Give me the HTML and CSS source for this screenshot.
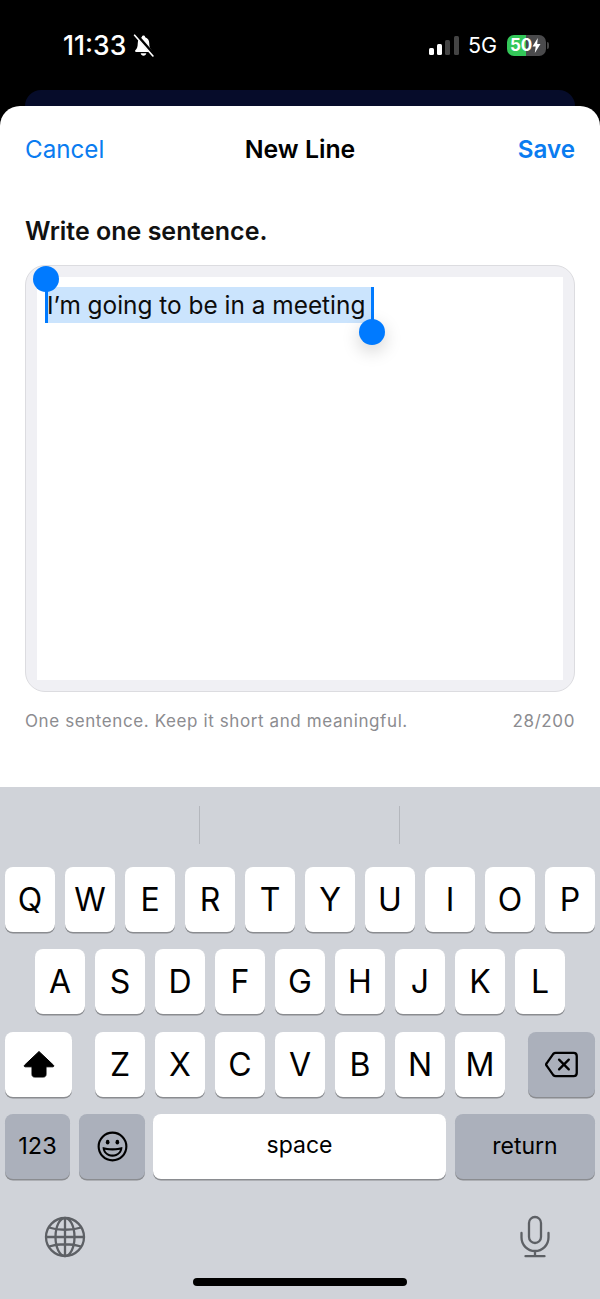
FILE: index.html
```html
<!DOCTYPE html>
<html lang="en">
<head>
<meta charset="utf-8">
<title>New Line</title>
<link rel="stylesheet" href="styles.css">
</head>
<body>
<div class="phone">
  <header class="status">
    <div class="status-left">
      <span class="time">11:33</span>
      <svg class="bell" viewBox="0 0 20 22"><path d="M10 1.500c-.9 0-1.500.6-1.600 1.500C5.800 3.800 4.500 6 4.500 8.800c0 3.400-.7 5.200-2.300 6.800-.6.600-.2 1.600.7 1.600h14.200c.9 0 1.300-1 .7-1.600-1.600-1.600-2.300-3.400-2.300-6.800 0-2.800-1.300-5-3.900-5.800C11.500 2.100 10.900 1.500 10 1.500zM7.300 18.300c.2 1.400 1.300 2.400 2.700 2.400s2.500-1 2.700-2.400z" fill="#fff"/><path d="M2.800 .6 19.800 19.900" stroke="#000" stroke-width="3.400"/><path d="M1.500 1.200 19 21" stroke="#fff" stroke-width="1.600" stroke-linecap="round"/></svg>
    </div>
    <div class="status-right">
      <svg class="signal" viewBox="0 0 30 19"><rect x="0" y="12" width="5" height="7" rx="1.500" fill="#fff"/><rect x="8" y="8" width="5" height="11" rx="1.500" fill="#fff"/><rect x="16" y="4" width="5" height="15" rx="1.500" fill="#444"/><rect x="25" y="0" width="5" height="19" rx="1.500" fill="#444"/></svg>
      <span class="net">5G</span>
      <div class="battery"><span class="battery-num">50</span><svg class="bolt" viewBox="0 0 9 15"><path d="M5.800 0 .5 8.500h3.200L2.800 15l5.700-9H5.200z" fill="#fff"/></svg></div>
      <span class="battery-nub"></span>
    </div>
  </header>
  <div class="behind-card"></div>
  <main class="sheet">
    <nav class="nav">
      <span class="nav-cancel">Cancel</span>
      <span class="nav-title">New Line</span>
      <span class="nav-save">Save</span>
    </nav>
    <h1 class="prompt">Write one sentence.</h1>
    <div class="field">
      <div class="field-inner">
        <span class="selection">I’m going to be in a meeting<i class="caret caret-start"></i><i class="caret caret-end"></i><i class="handle handle-start"></i><i class="handle handle-end"></i></span>
      </div>
    </div>
    <div class="hint">
      <span>One sentence. Keep it short and meaningful.</span>
      <span>28/200</span>
    </div>
  </main>
  <section class="keyboard">
    <div class="suggestions"><span class="slot"></span><span class="slot"></span><span class="slot"></span></div>
    <div class="rows">
      <div class="row">
        <span class="key">Q</span><span class="key">W</span><span class="key">E</span><span class="key">R</span><span class="key">T</span><span class="key">Y</span><span class="key">U</span><span class="key">I</span><span class="key">O</span><span class="key">P</span>
      </div>
      <div class="row row-mid">
        <span class="key">A</span><span class="key">S</span><span class="key">D</span><span class="key">F</span><span class="key">G</span><span class="key">H</span><span class="key">J</span><span class="key">K</span><span class="key">L</span>
      </div>
      <div class="row row-third">
        <span class="key key-shift"><svg class="ico-shift" viewBox="0 0 32 28"><path d="M16 1.500 1.500 15.200c-.6.600-.2 1.600.6 1.600H9v7.700c0 1.500 1 2.500 2.500 2.500h9c1.500 0 2.500-1 2.500-2.500v-7.700h6.900c.8 0 1.200-1 .6-1.600z" fill="#000" stroke="#000" stroke-linejoin="round"/></svg></span>
        <div class="letters">
          <span class="key">Z</span><span class="key">X</span><span class="key">C</span><span class="key">V</span><span class="key">B</span><span class="key">N</span><span class="key">M</span>
        </div>
        <span class="key key-dark key-delete"><svg class="ico-del" viewBox="0 0 34 27"><path d="M11 1.500h18.500c2 0 3.200 1.200 3.200 3.200v17.600c0 2-1.200 3.200-3.200 3.200H11c-1 0-1.800-.4-2.500-1.100L1.700 14.700c-.6-.7-.6-1.700 0-2.400l6.800-9.700c.7-.7 1.500-1.100 2.500-1.100z" fill="none" stroke="#000" stroke-width="2.400"/><path d="M14.500 8.500l10 10M24.500 8.500l-10 10" stroke="#000" stroke-width="2.400" stroke-linecap="round"/></svg></span>
      </div>
      <div class="row row-bottom">
        <span class="key key-dark key-num">123</span>
        <span class="key key-dark key-emoji"><svg class="ico-emoji" viewBox="0 0 32 32"><circle cx="16" cy="16" r="14.300" fill="none" stroke="#000" stroke-width="2.200"/><ellipse cx="11" cy="11.500" rx="1.900" ry="2.500"/><ellipse cx="21" cy="11.500" rx="1.900" ry="2.500"/><path d="M5.800 16.500c3 .9 6.500 1.300 10.200 1.300s7.200-.4 10.200-1.300c.3 5.500-4.400 10-10.200 10S5.500 22 5.800 16.500z"/><path d="M8.300 19.300c2.400.5 5 .7 7.700.7s5.300-.2 7.700-.7c-.7 2.800-3.800 5-7.700 5s-7-2.200-7.700-5z" fill="#abb0bb"/></svg></span>
        <span class="key key-space">space</span>
        <span class="key key-dark key-return">return</span>
      </div>
    </div>
    <div class="kb-tools">
      <svg class="ico-globe" viewBox="0 0 42 42" fill="none" stroke="#5d6065" stroke-width="2.300"><circle cx="21" cy="21" r="19"/><ellipse cx="21" cy="21" rx="9.500" ry="19"/><path d="M21 2v38M2 21h38M5 11.500c9 3 23 3 32 0M5 30.500c9-3 23-3 32 0"/></svg>
      <svg class="ico-mic" viewBox="0 0 30 42" fill="none" stroke="#5d6065" stroke-width="2.300" stroke-linecap="round"><rect x="9" y="1.500" width="12" height="26" rx="6"/><path d="M1.500 17.500v4.500c0 7.500 6 13.500 13.500 13.500s13.500-6 13.500-13.500v-4.500M15 35.500v5M5.500 40.700h19"/></svg>
    </div>
    <div class="home-bar"></div>
  </section>
</div>
</body>
</html>
```
FILE: styles.css
```css
* { box-sizing: border-box; }
html, body { margin: 0; padding: 0; background: #000; }
body { font-family: Inter, "Liberation Sans", sans-serif; }
.phone { width: 600px; height: 1299px; display: flex; flex-direction: column; overflow: hidden; background: #000; }

.status { height: 90px; flex: none; display: flex; justify-content: space-between; align-items: flex-start; padding: 28px 51px 0 63px; color: #fff; }
.status-left { display: flex; align-items: center; gap: 7px; height: 34px; }
.time { font-size: 26.500px; font-weight: 500; line-height: 34px; }
.bell { width: 21px; height: 23px; }
.status-right { display: flex; align-items: center; height: 34px; }
.signal { width: 30px; height: 19px; margin-right: 9px; }
.net { font-size: 21.500px; font-weight: 400; margin-right: 10px; }
.battery { width: 39px; height: 21px; border-radius: 7px; background: linear-gradient(90deg, #34c759 0 50%, #4a4a4c 50% 100%); display: flex; align-items: center; padding-left: 3px; }
.battery-num { font-size: 17px; font-weight: 700; color: #fff; line-height: 21px; }
.bolt { width: 9px; height: 15px; }
.battery-nub { width: 2px; height: 7px; background: #444; border-radius: 0 2px 2px 0; margin-left: 1px; }

.behind-card { height: 16px; flex: none; margin: 0 25px; background: #060c2a; border-radius: 16px 16px 0 0; }

.sheet { height: 681px; flex: none; background: #fff; border-radius: 20px 20px 0 0; padding: 0 25px; display: flex; flex-direction: column; }
.nav { height: 86px; flex: none; display: grid; grid-template-columns: 1fr auto 1fr; align-items: center; font-size: 24.200px; }
.nav-cancel { color: #0a7cf0; font-weight: 400; }
.nav-title { color: #000; font-weight: 600; font-size: 24.800px; }
.nav-save { color: #0a7cf0; font-weight: 600; justify-self: end; }
.prompt { margin: 0; height: 73px; padding-top: 23px; font-size: 25px; line-height: 32px; font-weight: 600; color: #111; }
.field { height: 427px; flex: none; background: #f0f0f4; border: 1px solid #dcdce0; border-radius: 20px; padding: 11px; }
.field-inner { height: 403px; background: #fff; padding: 10px 0 0 10px; }
.selection { position: relative; display: inline-block; height: 36px; line-height: 36px; font-size: 24.400px; color: #0c0c0c; background: #cbe4fd; padding: 0 7px 0 0; }
.caret { position: absolute; width: 3px; background: #007aff; }
.caret-start { left: -2px; top: 0; height: 36px; }
.caret-end { right: -2px; top: 0; height: 36px; }
.handle { position: absolute; width: 26px; height: 26px; border-radius: 50%; background: #007aff; }
.handle-start { left: -14px; top: -21px; }
.handle-end { right: -13px; top: 32px; box-shadow: 0 6px 18px rgba(0,0,0,.18); }
.hint { display: flex; justify-content: space-between; margin-top: 18px; font-size: 17px; line-height: 22px; color: #8c8c90; letter-spacing: .6px; }

.keyboard { flex: 1; background: #d0d3d9; display: flex; flex-direction: column; }
.suggestions { height: 80px; flex: none; display: flex; padding: 19px 0 23px; }
.slot { flex: none; width: 200px; border-right: 1px solid #b4b7bd; }
.slot:last-child { border-right: 0; }
.rows { display: flex; flex-direction: column; gap: 17.330px; padding: 0 5px; }
.row { display: flex; gap: 10px; height: 65px; }
.row-mid { padding: 0 30px; }
.row-third { justify-content: space-between; }
.row-bottom { gap: 9px; }
.letters { display: flex; gap: 10px; }
.key { flex: 1; min-width: 0; height: 65px; background: #fff; border-radius: 8px; box-shadow: 0 1.500px 0 #8a8c90; display: flex; align-items: center; justify-content: center; font-size: 32px; color: #000; }
.letters .key { width: 50px; flex: none; }
.key-dark { background: #abb0bb; }
.key-shift, .key-delete { flex: none; width: 67px; }
.key-num { flex: none; width: 65px; font-size: 23.500px; padding-bottom: 2px; }
.key-emoji { flex: none; width: 66px; margin-right: -1px; }
.key-space { flex: none; width: 293px; font-size: 23px; padding-bottom: 2px; }
.key-return { flex: none; width: 140px; font-size: 23px; padding-bottom: 1px; }
.ico-shift { width: 32px; height: 28px; }
.ico-del { width: 33px; height: 27px; }
.ico-emoji { width: 31px; height: 31px; }
.kb-tools { height: 82px; flex: none; display: flex; justify-content: space-between; align-items: center; padding: 35px 50px 0 44px; }
.ico-globe { width: 42px; height: 42px; }
.ico-mic { width: 30px; height: 43px; margin-top: -2px; }
.home-bar { width: 214px; height: 8px; flex: none; margin: 17px auto 0; border-radius: 4px; background: #000; }
```
